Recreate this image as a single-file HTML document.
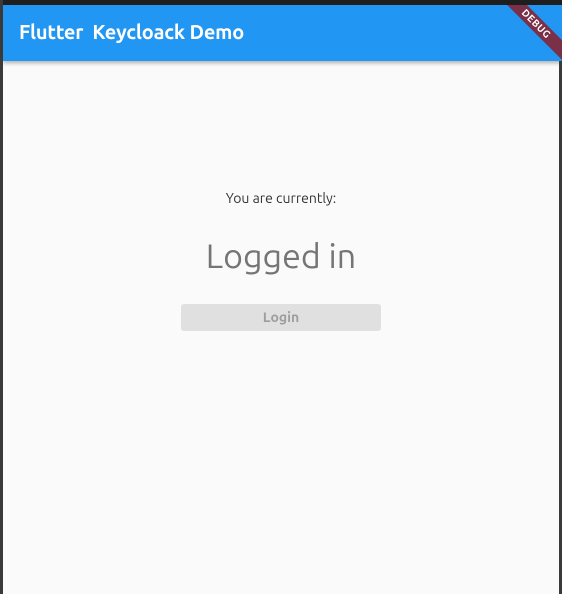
<!DOCTYPE html>
<html><head><style>
html,body{margin:0;padding:0;width:562px;height:594px;overflow:hidden;background:#fafafa;font-family:"Ubuntu","Liberation Sans",sans-serif;position:relative}
.top{position:absolute;left:0;top:0;width:562px;height:5px;background:#1e1e1e}
.lb{position:absolute;left:0;top:0;width:3px;height:594px;background:#3a3a3a}
.rb{position:absolute;left:559px;top:61px;width:3px;height:533px;background:#3a3a3a}
.bar{position:absolute;left:3px;top:5px;width:559px;height:56px;background:#2196f3;box-shadow:0 2px 4px rgba(0,0,0,.3);overflow:hidden}
.bar h1{margin:0;position:absolute;left:16px;top:15px;font-size:20px;font-weight:bold;color:#fff;white-space:pre;letter-spacing:-0.2px}
.ribbon{position:absolute;right:-34px;top:12px;width:120px;height:14px;background:#7b3049;transform:rotate(45deg);color:#fff;font-size:10px;font-weight:bold;text-align:center;line-height:14px;letter-spacing:0.5px}
.t1{position:absolute;left:0;width:562px;top:190px;text-align:center;font-size:14px;color:#333}
.t2{position:absolute;left:0;width:562px;top:237px;text-align:center;font-size:34px;color:#757575}
.btn{position:absolute;left:181px;top:304px;width:200px;height:27px;background:#e0e0e0;border-radius:3px;text-align:center;line-height:27px;font-size:14px;font-weight:bold;color:#9e9e9e}
</style></head><body>
<div class="bar"><h1>Flutter  Keycloack Demo</h1><div class="ribbon">DEBUG</div></div>
<div class="top"></div><div class="lb"></div><div class="rb"></div>
<div class="t1">You are currently:</div>
<div class="t2">Logged in</div>
<div class="btn">Login</div>
</body></html>
